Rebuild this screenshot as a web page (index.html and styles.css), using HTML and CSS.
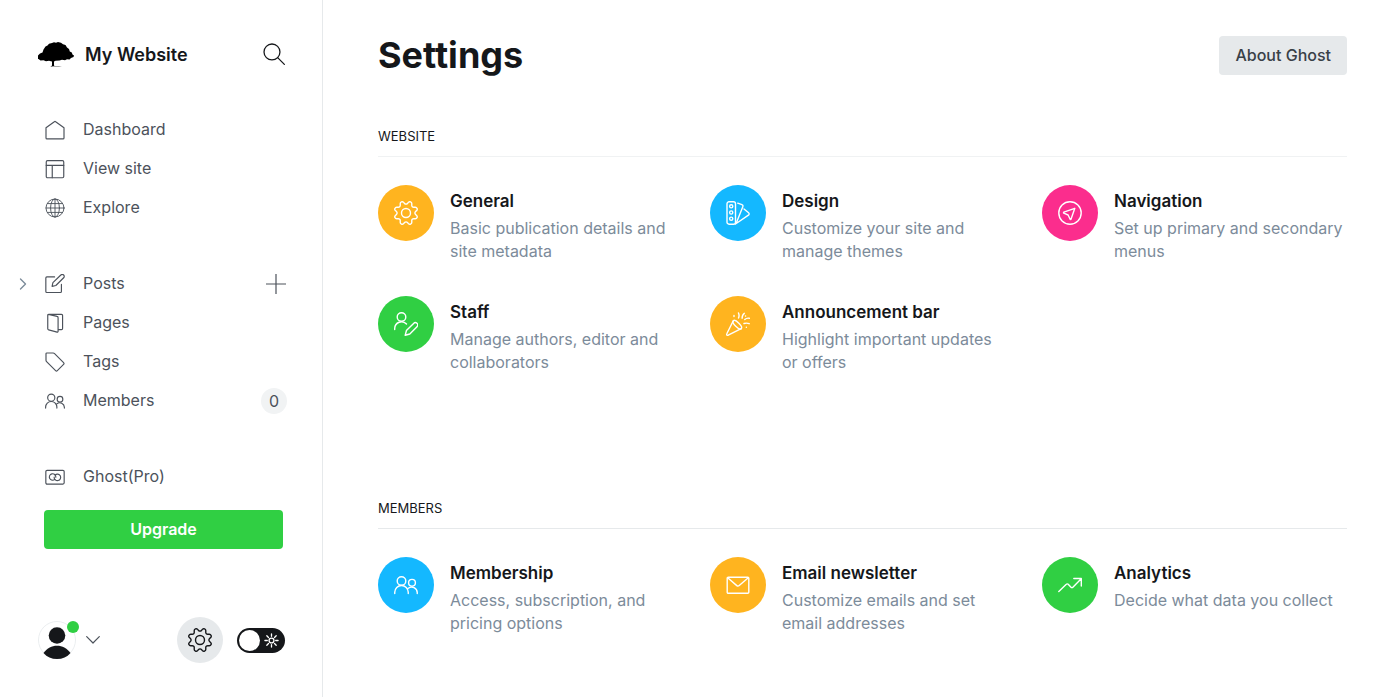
FILE: index.html
```html
<!DOCTYPE html>
<html lang="en">
<head>
    <meta charset="UTF-8">
    <meta name="viewport" content="width=device-width, initial-scale=1.0">
    <title>Settings - My Website</title>
    <link rel="stylesheet" href="styles.css">
</head>
<body>
    <!-- shared icons -->
    <svg class="sprite" aria-hidden="true">
        <symbol id="icon-cog" viewBox="0 0 24 24">
            <circle cx="12" cy="12" r="4.5"/>
            <path d="M10.546 2.438a1.957 1.957 0 0 0 2.908 0L14.4 1.4a1.959 1.959 0 0 1 3.41 1.413l-.071 1.4a1.958 1.958 0 0 0 2.051 2.054l1.4-.071a1.959 1.959 0 0 1 1.41 3.41l-1.042.94a1.96 1.96 0 0 0 0 2.909l1.042.94a1.959 1.959 0 0 1-1.413 3.41l-1.4-.071a1.958 1.958 0 0 0-2.056 2.056l.071 1.4A1.959 1.959 0 0 1 14.4 22.6l-.941-1.041a1.959 1.959 0 0 0-2.908 0L9.606 22.6A1.959 1.959 0 0 1 6.2 21.192l.072-1.4a1.958 1.958 0 0 0-2.056-2.056l-1.4.071A1.958 1.958 0 0 1 1.4 14.4l1.041-.94a1.96 1.96 0 0 0 0-2.909L1.4 9.606A1.958 1.958 0 0 1 2.809 6.2l1.4.071a1.958 1.958 0 0 0 2.058-2.06L6.2 2.81A1.959 1.959 0 0 1 9.606 1.4z"/>
        </symbol>
        <symbol id="icon-members" viewBox="0 0 24 24">
            <circle cx="7.5" cy="8" r="4.3"/>
            <circle cx="18" cy="9.8" r="3.4"/>
            <path d="M.75 20.500v-1.200a6.750 6.750 0 0 1 13.500 0v1.200M14.300 15.300a5.600 5.600 0 0 1 8.950 4.300v.900"/>
        </symbol>
    </svg>

    <div class="app">
        <nav class="sidebar">
            <div class="site-header">
                <svg class="site-logo" viewBox="0 0 36 26">
                    <path d="M0 14.500l2-2 2.500-1 1-3 2-3 2-1 1.500-1.800 3-.7 2-.8 2 .6 2-.8 3 .8 2 1.500 2.500.7 1.500 2.500 2 1.500.8 2.500 2 1 .7 2 1.500 1-.5 1.500-2.500 1-1.500 1.500-2.500-.3-2 1-3-.5-2.500.8-4 .2-1.500.8v4l1.500 1.200h-5l1.500-1.200v-4l-3-.8-3 .5-2.500-1-3 .2-2-1.500-2.500.2z"/>
                    <path class="ground" d="M12 25h12l-3 1h-6z"/>
                </svg>
                <span class="site-title">My Website</span>
                <button class="icon-button search" aria-label="Search site">
                    <svg class="icon" viewBox="0 0 24 24"><circle cx="9.8" cy="9.8" r="8.7"/><path d="M16 16l7.3 7.3"/></svg>
                </button>
            </div>

            <ul class="nav-list">
                <li><a href="#">
                    <svg class="icon" viewBox="0 0 24 24"><path d="M1.200 9.300v12.200a1.200 1.200 0 0 0 1.200 1.200h19.200a1.200 1.200 0 0 0 1.200-1.200V9.300L12.800 2a1.300 1.300 0 0 0-1.600 0z"/></svg>
                    Dashboard</a></li>
                <li><a href="#">
                    <svg class="icon" viewBox="0 0 24 24"><rect x="1.500" y="2" width="21" height="20.500" rx="1.500"/><path d="M1.500 7.700h21M8.700 7.700v14.800"/></svg>
                    View site</a></li>
                <li><a href="#">
                    <svg class="icon thin" viewBox="0 0 24 24"><circle cx="12" cy="12" r="10.8"/><ellipse cx="12" cy="12" rx="5.3" ry="10.8"/><path d="M12 1.2v21.6M1.2 12h21.6M3 6.7h18M3 17.3h18"/></svg>
                    Explore</a></li>
            </ul>

            <ul class="nav-list">
                <li class="posts">
                    <button class="icon-button expand" aria-label="Expand posts">
                        <svg class="icon" viewBox="0 0 8 12"><path d="M1.500 1l5 5-5 5"/></svg>
                    </button>
                    <a href="#">
                    <svg class="icon" viewBox="0 0 24 24"><path d="M11.500 3.500H2.200A1.200 1.200 0 0 0 1 4.700v16.300a1.200 1.200 0 0 0 1.200 1.200h16.300a1.200 1.200 0 0 0 1.200-1.200V12.500"/><path d="M13 13.800l-4.500 1 1-4.500L19 1.200a2.300 2.300 0 0 1 3.400 3.300z"/></svg>
                    Posts</a>
                    <button class="icon-button add" aria-label="New post">
                        <svg class="icon" viewBox="0 0 20 20"><path d="M10 0v20M0 10h20"/></svg>
                    </button>
                </li>
                <li><a href="#">
                    <svg class="icon" viewBox="0 0 24 24"><path d="M4.200 1.700l10.300 2.400a1.500 1.500 0 0 1 1.200 1.500v16.400a1 1 0 0 1-1.200.9L4.400 20.300a1.500 1.500 0 0 1-1.100-1.400V2.500a.9.9 0 0 1 .9-.8h15.600a1.300 1.300 0 0 1 1.300 1.300v15.600a1.300 1.300 0 0 1-1.300 1.300h-4.100"/></svg>
                    Pages</a></li>
                <li><a href="#">
                    <svg class="icon" viewBox="0 0 24 24"><path d="M1.200 2.200a1 1 0 0 1 1-1h7.600a2.500 2.500 0 0 1 1.700.7l10.800 10.800a1.500 1.500 0 0 1 0 2.100l-7.500 7.500a1.500 1.500 0 0 1-2.100 0L1.900 11.500a2.500 2.500 0 0 1-.7-1.700z"/></svg>
                    Tags</a></li>
                <li><a href="#">
                    <svg class="icon"><use href="#icon-members"/></svg>
                    Members</a><span class="count">0</span></li>
            </ul>

            <ul class="nav-list">
                <li><a href="#">
                    <svg class="icon" viewBox="0 0 24 24"><rect x="1" y="4" width="22" height="16.500" rx="1.500"/><path d="M11.800 14.800a3.900 3.900 0 1 1 1.200-2.600"/><path d="M12.200 9.600a3.900 3.900 0 1 1-1.200 2.600"/></svg>
                    Ghost(Pro)</a></li>
            </ul>
            <button class="upgrade">Upgrade</button>

            <div class="user-bar">
                <button class="user-menu" aria-label="User menu">
                    <span class="avatar">
                        <svg viewBox="0 0 38 38"><circle class="frame" cx="19" cy="19" r="18.5"/><circle cx="19" cy="14.500" r="8.300"/><path d="M5.500 32c4-5 8-7.300 13.500-7.300S28.500 27 32.500 32c-3.500 4-8 6-13.500 6S9 36 5.500 32z"/></svg>
                        <span class="status"></span>
                    </span>
                    <svg class="icon chevron" viewBox="0 0 14 8"><path d="M.7.7L7 7 13.300.7"/></svg>
                </button>
                <a class="settings-link" href="#" aria-label="Settings"><svg class="icon"><use href="#icon-cog"/></svg></a>
                <label class="night-shift">
                    <input type="checkbox" aria-label="Dark mode">
                    <svg class="icon" viewBox="0 0 16 16"><circle cx="8" cy="8" r="2.600"/><path d="M8 1v2.500M8 12.500V15M1 8h2.500M12.500 8H15M3 3l1.800 1.800M11.200 11.200L13 13M3 13l1.800-1.800M11.200 4.800L13 3"/></svg>
                </label>
            </div>
        </nav>

        <main class="content">
            <header class="page-header">
                <h1>Settings</h1>
                <button class="about">About Ghost</button>
            </header>

            <section class="group website">
                <h2>Website</h2>
                <div class="cards">
                    <a class="card" href="#">
                        <span class="badge yellow"><svg class="icon"><use href="#icon-cog"/></svg></span>
                        <div>
                            <h3>General</h3>
                            <p>Basic publication details and site metadata</p>
                        </div>
                    </a>
                    <a class="card" href="#">
                        <span class="badge blue"><svg class="icon" viewBox="0 0 24 24"><rect x="1" y=".8" width="8.500" height="22.400" rx="2"/><circle cx="5.200" cy="5.300" r="1.600"/><circle cx="5.200" cy="11.500" r="1.600"/><circle cx="5.200" cy="17.700" r="1.600"/><path d="M11.700 2.200l4.200 1.400a1.600 1.600 0 0 1 1 2L10.500 21.500M18 8l4.600 3.800a1.400 1.400 0 0 1 .2 2L9.500 23"/></svg></span>
                        <div>
                            <h3>Design</h3>
                            <p>Customize your site and manage themes</p>
                        </div>
                    </a>
                    <a class="card" href="#">
                        <span class="badge pink"><svg class="icon" viewBox="0 0 24 24"><circle cx="12" cy="12" r="11.200"/><path d="M16.800 7.300L5.800 11.200a.5.5 0 0 0 0 .9l4.300 1.900 2 4.300a.5.5 0 0 0 .9 0z"/></svg></span>
                        <div>
                            <h3>Navigation</h3>
                            <p>Set up primary and secondary menus</p>
                        </div>
                    </a>
                    <a class="card" href="#">
                        <span class="badge green"><svg class="icon" viewBox="0 0 24 24"><circle cx="7.500" cy="5" r="4.300"/><path d="M.7 17.500v-1A6.800 6.800 0 0 1 12.500 12"/><path d="M15.800 22l-4.600 1.200 1.200-4.600 7.200-7.200a2.300 2.300 0 0 1 3.400 3.300z"/></svg></span>
                        <div>
                            <h3>Staff</h3>
                            <p>Manage authors, editor and collaborators</p>
                        </div>
                    </a>
                    <a class="card" href="#">
                        <span class="badge yellow"><svg class="icon" viewBox="0 0 24 24"><path d="M7.300 8.800L.8 21.800a1 1 0 0 0 1.400 1.400l13-6.500"/><ellipse cx="11.300" cy="12.700" rx="2.200" ry="5.600" transform="rotate(-45 11.300 12.700)"/><path d="M12.500 1c.8 1.800.7 3.500 0 5M18.300 1.300c-2 1.200-2.200 3-2.200 5M23.300 6.300c-2-.5-3.400.2-4.500 1.200M18 11.500c1.800-.6 3.500-.6 5.200.2M8 3.500v1M20.300 15.300h.1M19.500 4l.1-.1"/></svg></span>
                        <div>
                            <h3>Announcement bar</h3>
                            <p>Highlight important updates or&nbsp;offers</p>
                        </div>
                    </a>
                </div>
            </section>

            <section class="group">
                <h2>Members</h2>
                <div class="cards">
                    <a class="card" href="#">
                        <span class="badge blue"><svg class="icon"><use href="#icon-members"/></svg></span>
                        <div>
                            <h3>Membership</h3>
                            <p>Access, subscription, and pricing options</p>
                        </div>
                    </a>
                    <a class="card" href="#">
                        <span class="badge yellow"><svg class="icon" viewBox="0 0 24 24"><rect x="1.200" y="4.200" width="21.600" height="16" rx="1"/><path d="M1.700 4.700l9.100 7.900a1.800 1.800 0 0 0 2.400 0l9.100-7.900"/></svg></span>
                        <div>
                            <h3>Email newsletter</h3>
                            <p>Customize emails and set email addresses</p>
                        </div>
                    </a>
                    <a class="card" href="#">
                        <span class="badge green"><svg class="icon" viewBox="0 0 24 24"><path d="M.8 18.500l7.500-7.200a1.300 1.300 0 0 1 1.900 0l2.800 2.900a1.300 1.300 0 0 0 1.900 0L23.200 5.800M15.800 5.500h7.500V13"/></svg></span>
                        <div>
                            <h3>Analytics</h3>
                            <p>Decide what data you collect</p>
                        </div>
                    </a>
                </div>
            </section>
        </main>
    </div>
</body>
</html>
```
FILE: styles.css
```css
* {
    box-sizing: border-box;
}

body {
    margin: 0;
    background: #fff;
    color: #15171a;
    font-family: Inter, "Liberation Sans", sans-serif;
    font-size: 16px;
    line-height: 23px;
}

h1, h2, h3, p, ul {
    margin: 0;
    padding: 0;
}

a {
    color: inherit;
    text-decoration: none;
}

button {
    border: 0;
    padding: 0;
    background: none;
    color: inherit;
    font: inherit;
    cursor: pointer;
}

.sprite {
    position: absolute;
    width: 0;
    height: 0;
}

.icon {
    display: block;
    width: 20px;
    height: 20px;
    flex: none;
    fill: none;
    stroke: currentColor;
    stroke-width: 1.4;
    stroke-linecap: round;
    stroke-linejoin: round;
}

.icon.thin {
    stroke-width: 1.1;
}

.app {
    display: flex;
    min-height: 100vh;
}

/* Sidebar */
.sidebar {
    display: flex;
    flex-direction: column;
    flex: none;
    width: 323px;
    padding: 35px 35px 34px 38px;
    border-right: 1px solid #e6e9eb;
}

.site-header {
    display: flex;
    align-items: center;
    height: 38px;
}

.site-logo {
    width: 36px;
    height: 26px;
    margin-right: 11px;
    fill: #000;
}

.site-logo .ground {
    fill: #aaa;
}

.site-title {
    font-size: 18px;
    font-weight: 600;
}

.search {
    margin-left: auto;
    padding-right: 2px;
}

.search .icon {
    width: 22px;
    height: 22px;
}

.nav-list {
    margin-top: 37px;
    list-style: none;
    color: #4c525b;
}

.nav-list li {
    display: flex;
    align-items: center;
    position: relative;
    height: 39px;
}

.nav-list a {
    display: flex;
    align-items: center;
    gap: 18px;
    flex: 1;
    padding-left: 7px;
}

.expand {
    position: absolute;
    left: -20px;
    color: #7c8b9a;
}

.expand .icon {
    width: 10px;
    height: 12px;
}

.add {
    padding-right: 1px;
}

.add .icon {
    stroke-width: 1.2;
}

.count {
    width: 26px;
    height: 26px;
    border-radius: 50%;
    background: #f1f3f4;
    line-height: 26px;
    text-align: center;
}

.upgrade {
    height: 39px;
    margin: 14px 4px 0 6px;
    border-radius: 4px;
    background: #30cf43;
    color: #fff;
    font-weight: 600;
}

.user-bar {
    display: flex;
    align-items: center;
    margin-top: auto;
}

.user-menu {
    display: flex;
    align-items: center;
    gap: 10px;
    margin-right: auto;
}

.avatar {
    position: relative;
    width: 38px;
    height: 38px;
}

.avatar svg {
    display: block;
    fill: #15171a;
}

.avatar .frame {
    fill: #fff;
    stroke: #ebeef0;
}

.status {
    position: absolute;
    top: 0;
    right: -3px;
    width: 12px;
    height: 12px;
    border-radius: 50%;
    background: #30cf43;
}

.chevron {
    width: 14px;
    height: 8px;
    color: #4c525b;
    stroke-width: 1.2;
}

.settings-link {
    display: flex;
    align-items: center;
    justify-content: center;
    width: 46px;
    height: 46px;
    margin-right: 14px;
    border-radius: 50%;
    background: #e6e9eb;
}

.settings-link .icon {
    width: 24px;
    height: 24px;
}

.night-shift {
    display: flex;
    align-items: center;
    gap: 4px;
    width: 48px;
    height: 25px;
    margin-right: 2px;
    padding-left: 2px;
    border-radius: 13px;
    background: #15171a;
    color: #fff;
    cursor: pointer;
}

.night-shift input {
    appearance: none;
    width: 21px;
    height: 21px;
    margin: 0;
    border-radius: 50%;
    background: #fff;
}

.night-shift .icon {
    width: 15px;
    height: 15px;
}

/* Main content */
.content {
    flex: 1;
    padding: 32px 53px 32px 55px;
}

.page-header {
    display: flex;
    align-items: center;
    justify-content: space-between;
    height: 46px;
}

h1 {
    font-size: 36px;
    font-weight: 700;
    line-height: 46px;
}

.about {
    height: 39px;
    padding: 0 16px;
    border-radius: 4px;
    background: #e6e9eb;
    color: #394047;
    font-weight: 500;
}

.group {
    margin-top: 47px;
}

.website {
    min-height: 325px;
}

.group h2 {
    padding-bottom: 8px;
    border-bottom: 1px solid #e6e9eb;
    font-size: 13px;
    font-weight: 400;
    text-transform: uppercase;
}

.website h2 {
    border-color: #f0f2f3;
}

.cards {
    display: grid;
    grid-template-columns: repeat(3, 1fr);
    gap: 33px 27px;
    margin-top: 28px;
}

.card {
    display: flex;
    gap: 16px;
}

.card h3 {
    margin-top: 5px;
    font-size: 17px;
    font-weight: 600;
}

.card p {
    margin-top: 4px;
    color: #7c8b9a;
}

.badge {
    display: flex;
    align-items: center;
    justify-content: center;
    flex: none;
    width: 56px;
    height: 56px;
    border-radius: 50%;
    color: #fff;
}

.badge .icon {
    width: 24px;
    height: 24px;
}

.yellow { background: #ffb41f; }
.blue { background: #14b8ff; }
.pink { background: #fb2d8d; }
.green { background: #30cf43; }
```
